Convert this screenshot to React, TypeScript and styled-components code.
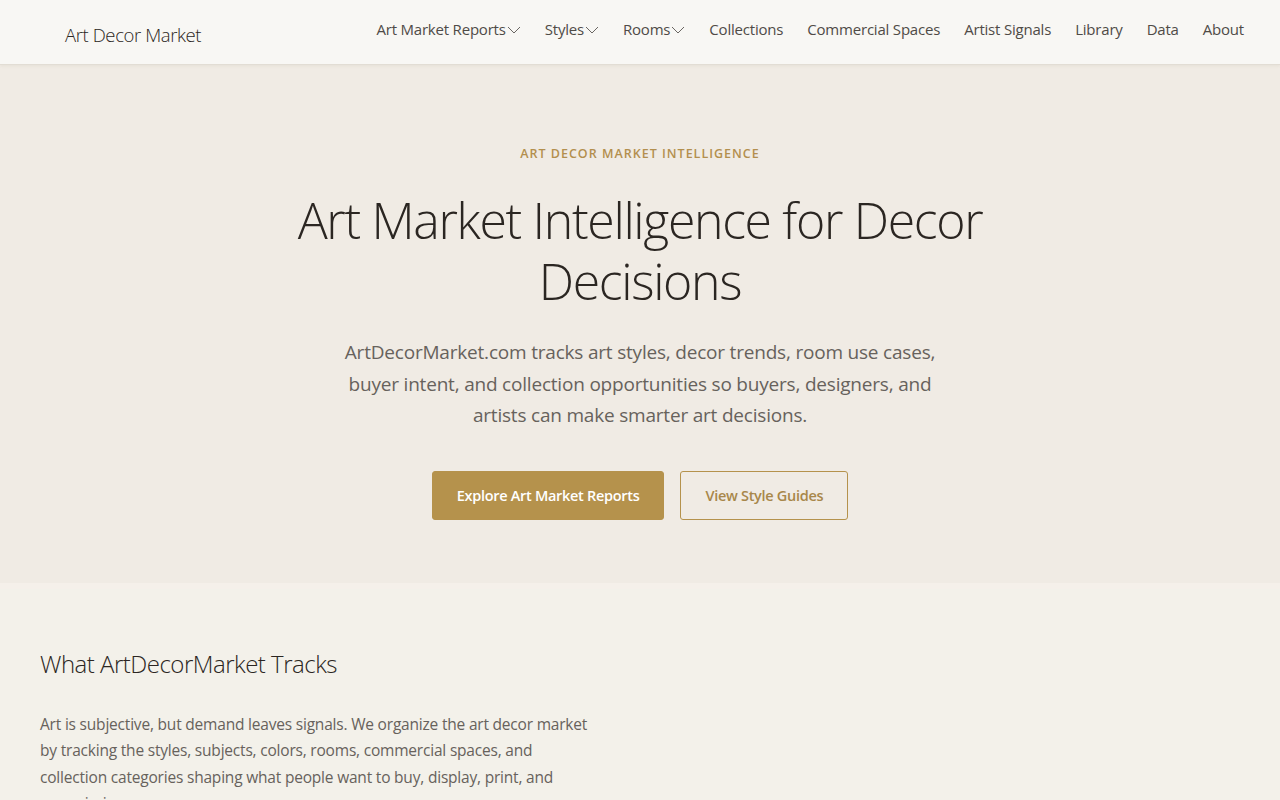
import styled, { createGlobalStyle } from 'styled-components';

const GlobalStyle = createGlobalStyle`
	* {
		box-sizing: border-box;
	}
	body {
		margin: 0;
		background: #f3f1ea;
		font-family: 'Open Sans', 'Noto Sans', sans-serif;
		color: #2b2622;
	}
`;

const navItems = [
	{ label: 'Art Market Reports', dropdown: true },
	{ label: 'Styles', dropdown: true },
	{ label: 'Rooms', dropdown: true },
	{ label: 'Collections' },
	{ label: 'Commercial Spaces' },
	{ label: 'Artist Signals' },
	{ label: 'Library' },
	{ label: 'Data' },
	{ label: 'About' },
];

const Chevron = () => (
	<svg width='14' height='8' viewBox='0 0 14 8' fill='none'>
		<path d='M1 1l6 6 6-6' stroke='#6a6662' strokeWidth='1' />
	</svg>
);

const App = () => {
	return (
		<>
			<GlobalStyle />
			<Header>
				<Logo>Art Decor Market</Logo>
				<Nav>
					{navItems.map((item) => (
						<NavLink key={item.label} href='#'>
							{item.label}
							{item.dropdown && <Chevron />}
						</NavLink>
					))}
				</Nav>
			</Header>
			<Hero>
				<Eyebrow>Art Decor Market Intelligence</Eyebrow>
				<HeroTitle>Art Market Intelligence for Decor Decisions</HeroTitle>
				<HeroText>
					ArtDecorMarket.com tracks art styles, decor trends, room use cases, buyer intent, and collection
					opportunities so buyers, designers, and artists can make smarter art decisions.
				</HeroText>
				<Actions>
					<Button $variant='primary'>Explore Art Market Reports</Button>
					<Button $variant='outline'>View Style Guides</Button>
				</Actions>
			</Hero>
			<Section>
				<SectionTitle>What ArtDecorMarket Tracks</SectionTitle>
				<SectionText>
					Art is subjective, but demand leaves signals. We organize the art decor market by tracking the styles,
					subjects, colors, rooms, commercial spaces, and collection categories shaping what people want to buy,
					display, print, and commission.
				</SectionText>
			</Section>
		</>
	);
};

export default App;

const Header = styled.header`
	height: 65px;
	display: flex;
	align-items: center;
	justify-content: space-between;
	padding: 0 36px 0 65px;
	background: #f8f7f4;
	border-bottom: 1px solid #e2ddd4;
	box-shadow: 0 1px 3px rgba(120, 100, 70, 0.08);
	position: relative;
	z-index: 1;
`;

const Logo = styled.div`
	font-size: 18.5px;
	font-weight: 300;
	color: #2b2622;
	letter-spacing: -0.4px;
	padding-top: 4px;
`;

const Nav = styled.nav`
	display: flex;
	align-items: center;
	gap: 24px;
	padding-bottom: 6px;
`;

const NavLink = styled.a`
	display: flex;
	align-items: center;
	gap: 1px;
	font-size: 15px;
	color: #4f4b47;
	text-decoration: none;
	letter-spacing: -0.2px;

	svg {
		margin-top: 1px;
	}
`;

const Hero = styled.section`
	background: #f0ebe4;
	display: flex;
	flex-direction: column;
	align-items: center;
	text-align: center;
	padding: 80px 20px 63px;
`;

const Eyebrow = styled.div`
	font-size: 12.5px;
	font-weight: 600;
	text-transform: uppercase;
	letter-spacing: 1px;
	color: #b38f4e;
`;

const HeroTitle = styled.h1`
	margin: 28px 0 0;
	max-width: 780px;
	font-size: 50px;
	font-weight: 300;
	line-height: 61px;
	letter-spacing: -1.35px;
	color: #2b2622;
`;

const HeroText = styled.p`
	margin: 25px 0 0;
	max-width: 610px;
	font-size: 19px;
	line-height: 31.5px;
	color: #67625c;
	letter-spacing: -0.2px;
`;

const Actions = styled.div`
	display: flex;
	gap: 16px;
	margin-top: 39px;
`;

const Button = styled.a<{ $variant: 'primary' | 'outline' }>`
	display: inline-flex;
	align-items: center;
	justify-content: center;
	height: 49px;
	padding: 0 24px;
	border-radius: 3px;
	font-size: 14.5px;
	font-weight: 600;
	letter-spacing: -0.3px;
	cursor: pointer;
	border: 1px solid #b5924c;
	background: ${(p) => (p.$variant === 'primary' ? '#b5924c' : 'transparent')};
	color: ${(p) => (p.$variant === 'primary' ? '#ffffff' : '#a8874a')};
`;

const Section = styled.section`
	background: #f3f1ea;
	border-top: 6px solid #f5f0ea;
	padding: 58px 40px 40px;
`;

const SectionTitle = styled.h2`
	margin: 0;
	font-size: 24px;
	font-weight: 300;
	letter-spacing: -0.5px;
	line-height: 34px;
	color: #2b2622;
`;

const SectionText = styled.p`
	margin: 30px 0 0;
	max-width: 560px;
	font-size: 15.5px;
	line-height: 26.5px;
	color: #67625c;
	letter-spacing: -0.2px;
`;
